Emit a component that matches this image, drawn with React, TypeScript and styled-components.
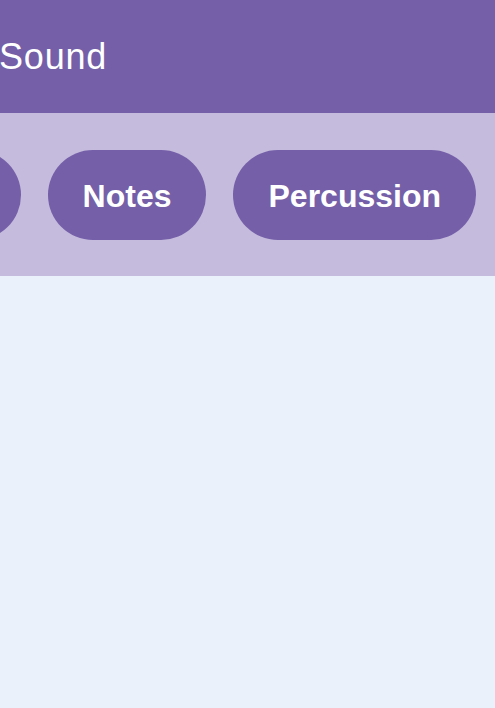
import styled, { createGlobalStyle } from "styled-components";

const GlobalStyle = createGlobalStyle`
  html, body {
    margin: 0;
    padding: 0;
    background-color: #eaf1fa;
    font-family: "Liberation Sans", Arial, sans-serif;
  }
`;

const Container = styled.div`
  width: 100vw;
  min-height: 100vh;
  display: flex;
  flex-direction: column;
  overflow: hidden;
`;

const Header = styled.header`
  height: 113px;
  display: flex;
  align-items: center;
  background-color: #745fa8;
  flex-shrink: 0;
`;

const Title = styled.h1`
  margin: 0 0 0 -1px;
  font-size: 36px;
  font-weight: 400;
  letter-spacing: 0.8px;
  color: #ffffff;
  white-space: nowrap;
`;

const TabBar = styled.nav`
  height: 163px;
  display: flex;
  align-items: center;
  justify-content: flex-end;
  gap: 27px;
  padding-right: 19px;
  background-color: #c5bbdd;
  overflow: hidden;
  flex-shrink: 0;
`;

const Tab = styled.button`
  height: 90px;
  padding: 3px 35px 0;
  border: none;
  border-radius: 45px;
  background-color: #745fa8;
  color: #ffffff;
  font-family: "Liberation Sans", Arial, sans-serif;
  font-size: 32px;
  font-weight: 700;
  white-space: nowrap;
  flex-shrink: 0;
  cursor: pointer;
`;

const Content = styled.main`
  flex: 1;
  background-color: #eaf1fa;
`;

const tabs = ["Melody", "Notes", "Percussion"];

const App = () => {
  return (
    <Container>
      <GlobalStyle />
      <Header>
        <Title>Sound</Title>
      </Header>
      <TabBar>
        {tabs.map((t) => (
          <Tab key={t}>{t}</Tab>
        ))}
      </TabBar>
      <Content />
    </Container>
  );
};

export default App;
